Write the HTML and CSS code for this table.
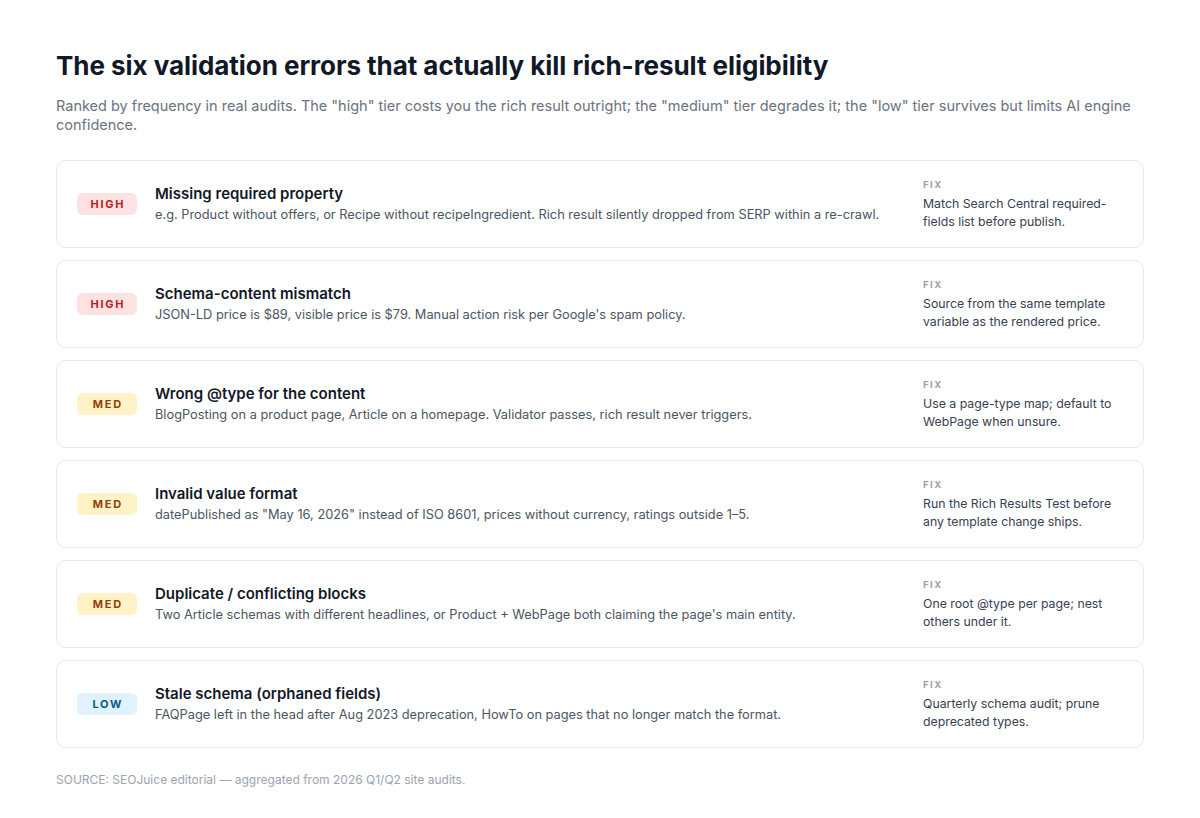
FILE: index.html
```html
<!DOCTYPE html>
<html lang="en">
<head>
<meta charset="utf-8">
<title>Validation errors</title>
<link rel="stylesheet" href="styles.css">
</head>
<body>
<main class="page">
  <h1 class="title">The six validation errors that actually kill rich-result eligibility</h1>
  <p class="lede">Ranked by frequency in real audits. The "high" tier costs you the rich result outright; the "medium" tier degrades it; the "low" tier survives but limits AI engine confidence.</p>

  <div class="list">
    <div class="card">
      <span class="badge high">HIGH</span>
      <div class="body">
        <div class="name">Missing required property</div>
        <div class="desc">e.g. Product without offers, or Recipe without recipeIngredient. Rich result silently dropped from SERP within a re-crawl.</div>
      </div>
      <div class="fix">
        <div class="fix-label">FIX</div>
        <div class="fix-text">Match Search Central required-fields list before publish.</div>
      </div>
    </div>

    <div class="card">
      <span class="badge high">HIGH</span>
      <div class="body">
        <div class="name">Schema-content mismatch</div>
        <div class="desc">JSON-LD price is $89, visible price is $79. Manual action risk per Google's spam policy.</div>
      </div>
      <div class="fix">
        <div class="fix-label">FIX</div>
        <div class="fix-text">Source from the same template variable as the rendered price.</div>
      </div>
    </div>

    <div class="card">
      <span class="badge med">MED</span>
      <div class="body">
        <div class="name">Wrong @type for the content</div>
        <div class="desc">BlogPosting on a product page, Article on a homepage. Validator passes, rich result never triggers.</div>
      </div>
      <div class="fix">
        <div class="fix-label">FIX</div>
        <div class="fix-text">Use a page-type map; default to WebPage when unsure.</div>
      </div>
    </div>

    <div class="card">
      <span class="badge med">MED</span>
      <div class="body">
        <div class="name">Invalid value format</div>
        <div class="desc">datePublished as "May 16, 2026" instead of ISO 8601, prices without currency, ratings outside 1–5.</div>
      </div>
      <div class="fix">
        <div class="fix-label">FIX</div>
        <div class="fix-text">Run the Rich Results Test before any template change ships.</div>
      </div>
    </div>

    <div class="card">
      <span class="badge med">MED</span>
      <div class="body">
        <div class="name">Duplicate / conflicting blocks</div>
        <div class="desc">Two Article schemas with different headlines, or Product + WebPage both claiming the page's main entity.</div>
      </div>
      <div class="fix">
        <div class="fix-label">FIX</div>
        <div class="fix-text">One root @type per page; nest others under it.</div>
      </div>
    </div>

    <div class="card">
      <span class="badge low">LOW</span>
      <div class="body">
        <div class="name">Stale schema (orphaned fields)</div>
        <div class="desc">FAQPage left in the head after Aug 2023 deprecation, HowTo on pages that no longer match the format.</div>
      </div>
      <div class="fix">
        <div class="fix-label">FIX</div>
        <div class="fix-text">Quarterly schema audit; prune deprecated types.</div>
      </div>
    </div>
  </div>

  <p class="source">SOURCE: SEOJuice editorial — aggregated from 2026 Q1/Q2 site audits.</p>
</main>
</body>
</html>
```

FILE: styles.css
```css
* { box-sizing: border-box; }

html, body {
  margin: 0;
  padding: 0;
  background: #ffffff;
}

body {
  font-family: Inter, "Noto Sans", "Liberation Sans", sans-serif;
  color: #111827;
}

.page {
  padding: 49px 56px 30px;
}

.title {
  margin: 0;
  font-size: 26px;
  line-height: 34px;
  font-weight: 700;
  letter-spacing: -0.05px;
  color: #111827;
}

.lede {
  margin: 13px 0 0;
  font-size: 14.5px;
  line-height: 19px;
  color: #6b7280;
}

.list {
  margin-top: 26px;
  display: flex;
  flex-direction: column;
  gap: 12px;
}

.card {
  display: flex;
  align-items: center;
  gap: 18px;
  height: 88px;
  padding: 0 20px;
  border: 1px solid #e5e7eb;
  border-radius: 10px;
  background: #fff;
}

.badge {
  flex: 0 0 60px;
  height: 22px;
  border-radius: 6px;
  display: flex;
  align-items: center;
  justify-content: center;
  font-size: 11px;
  font-weight: 700;
  letter-spacing: 1.7px;
  padding-left: 1.7px;
}

.badge.high { background: #fee2e2; color: #b91c1c; }
.badge.med { background: #fef3c7; color: #92400e; }
.badge.low { background: #e0f2fe; color: #075985; }

.body {
  flex: 1 1 auto;
  min-width: 0;
}

.name {
  font-size: 15px;
  line-height: 20px;
  font-weight: 600;
  color: #111827;
}

.desc {
  margin-top: 1px;
  font-size: 12.8px;
  line-height: 19px;
  color: #4b5563;
}

.fix {
  flex: 0 0 200px;
  margin-left: 6px;
}

.fix-label {
  font-size: 9.5px;
  line-height: 14px;
  font-weight: 700;
  letter-spacing: 1.5px;
  color: #9ca3af;
  margin-bottom: 3px;
}

.fix-text {
  font-size: 12.3px;
  line-height: 18px;
  color: #374151;
}

.source {
  margin: 24px 0 0;
  font-size: 12px;
  line-height: 16px;
  color: #9ca3af;
}
```
